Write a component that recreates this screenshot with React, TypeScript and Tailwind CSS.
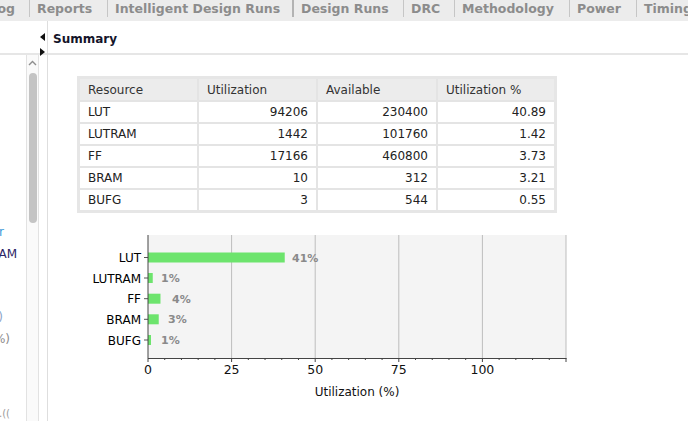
import React from 'react';

const tabs = [
  { label: 'Reports', w: 'w-[78px]', strong: false },
  { label: 'Intelligent Design Runs', w: 'w-[185px]', strong: false },
  { label: 'Design Runs', w: 'w-[111px]', strong: true },
  { label: 'DRC', w: 'w-[51px]', strong: false },
  { label: 'Methodology', w: 'w-[115px]', strong: false },
  { label: 'Power', w: 'w-[67px]', strong: false },
  { label: 'Timing', w: 'w-[80px]', strong: false },
];

const rows = [
  { name: 'LUT', used: '94206', avail: '230400', pct: 40.89 },
  { name: 'LUTRAM', used: '1442', avail: '101760', pct: 1.42 },
  { name: 'FF', used: '17166', avail: '460800', pct: 3.73 },
  { name: 'BRAM', used: '10', avail: '312', pct: 3.21 },
  { name: 'BUFG', used: '3', avail: '544', pct: 0.55 },
];

// chart geometry, in page coordinates
const X0 = 148;
const X1 = 566;
const TOP = 236;
const BOTTOM = 359;
const PX = (X1 - X0) / 125;
const centers = [258.5, 279, 299.7, 320.3, 341];
const labelX = [292, 161, 172, 168, 161];

function Tab({ label, w, strong }: { label: string; w: string; strong: boolean }) {
  return (
    <div className={`${w} flex shrink-0 h-full`}>
      <div className={strong ? 'w-[2px] h-[17px] bg-[#b3b3b3]' : 'w-px h-[17px] bg-[#c6c6c6]'} />
      <div className="pl-[7px] whitespace-nowrap">{label}</div>
    </div>
  );
}

function Chart() {
  const ticks: number[] = [];
  for (let v = 0; v <= 125; v += 5) ticks.push(v);
  return (
    <svg width={640} height={196} className="block">
      <g transform="translate(-48,-225)" fontFamily="DejaVu Sans, sans-serif">
        <rect x={X0} y={TOP} width={X1 - X0} height={BOTTOM - TOP} fill="#f4f4f4" />
        {[25, 50, 75, 100, 125].map((v) => (
          <line key={v} x1={X0 + v * PX} x2={X0 + v * PX} y1={TOP} y2={BOTTOM} stroke="#bdbdbd" strokeWidth={1} />
        ))}
        {rows.map((r, i) => (
          <g key={r.name}>
            <rect x={X0} y={centers[i] - 5} width={Math.max(r.pct * PX, 3)} height={10} fill="#6de46d" />
            <line x1={X0 - 4} x2={X0} y1={centers[i]} y2={centers[i]} stroke="#555" />
            <text x={141} y={centers[i] + 4.5} textAnchor="end" fontSize={12} fill="#000">
              {r.name}
            </text>
            <text x={labelX[i]} y={centers[i] + 4} fontSize={11} fontWeight="bold" fill="#8a8a8a">
              {Math.round(r.pct)}%
            </text>
          </g>
        ))}
        <line x1={X0} x2={X0} y1={TOP} y2={BOTTOM} stroke="#444" />
        <line x1={X0} x2={X1 + 0.5} y1={BOTTOM + 0.5} y2={BOTTOM + 0.5} stroke="#444" />
        {ticks.map((v) => (
          <line
            key={v}
            x1={X0 + v * PX}
            x2={X0 + v * PX}
            y1={BOTTOM}
            y2={BOTTOM + (v % 25 === 0 ? 4 : 2)}
            stroke="#444"
          />
        ))}
        {[0, 25, 50, 75, 100].map((v) => (
          <text key={v} x={X0 + v * PX} y={375} textAnchor="middle" fontSize={12.5} fill="#111">
            {v}
          </text>
        ))}
        <text x={357} y={397} textAnchor="middle" fontSize={12} fill="#111">
          Utilization (%)
        </text>
      </g>
    </svg>
  );
}

export default function App() {
  return (
    <div className="w-[688px] h-[421px] overflow-hidden bg-white font-['DejaVu_Sans',sans-serif]">
      {/* tab strip */}
      <div className="h-[21px] bg-[#ececec] flex text-[12.5px] font-bold text-[#8c8c8c] overflow-hidden">
        <div className="w-[29px] shrink-0 flex justify-end pr-[14px] overflow-hidden whitespace-nowrap">
          Log
        </div>
        {tabs.map((t) => (
          <Tab key={t.label} {...t} />
        ))}
      </div>

      <div className="flex h-[400px]">
        {/* left tree panel, scrolled sideways */}
        <div className="relative w-[48px] shrink-0 border-r border-[#dedede] flex flex-col">
          <div className="h-[34px] border-b-2 border-[#e6e6e6]" />
          <svg className="absolute left-[40px] top-[12px]" width="5" height="8">
            <polygon points="5,0 5,8 0,4" fill="#111" />
          </svg>
          <svg className="absolute left-[40px] top-[27px]" width="5" height="8">
            <polygon points="0,0 0,8 5,4" fill="#111" />
          </svg>
          <div className="flex flex-1">
            <div className="w-[26px] overflow-hidden text-[12px] pt-[166px] flex flex-col">
              <div className="h-[22px] flex justify-end items-center pr-[22px] whitespace-nowrap text-[#3b9ad9]">Timer</div>
              <div className="h-[22px] flex justify-end items-center pr-[9px] whitespace-nowrap text-[#2d2466]">LUTRAM</div>
              <div className="h-[41px]" />
              <div className="h-[22px] flex justify-end items-center pr-[23px] whitespace-nowrap text-[#8aa4c8]">(3)</div>
              <div className="h-[21px] flex justify-end items-center pr-[16px] whitespace-nowrap text-[#8c8c8c]">(1%)</div>
              <div className="h-[57px]" />
              <div className="h-[14px] flex justify-end items-center pr-[16px] whitespace-nowrap text-[10px] text-[#9a9a9a]">
                (1.((
              </div>
            </div>
            <div className="w-[13px] border-x border-[#e2e2e2] bg-[#fafafa] flex flex-col items-center">
              <svg className="mt-[5px]" width="9" height="6" viewBox="0 0 9 6">
                <path d="M1 5 L4.5 1.5 L8 5" fill="none" stroke="#8e8e8e" strokeWidth="1.4" />
              </svg>
              <div className="mt-[7px] w-[8px] h-[150px] rounded-full bg-[#c4c4c4]" />
            </div>
            <div className="w-[8px]" />
          </div>
        </div>

        {/* main summary panel */}
        <div className="flex-1 flex flex-col">
          <div className="h-[34px] border-b-2 border-[#e6e6e6] flex items-center pl-[5px] pt-[4px] text-[12px] font-bold text-[#14142a]">
            Summary
          </div>

          <div className="ml-[29px] mt-[21px] w-[480px] bg-[#e6e6e6] p-[3px]">
            <div className="grid grid-cols-[117px_117px_118px_116px] gap-[2px] bg-[#e4e4e4] text-[12px] text-[#222]">
              {['Resource', 'Utilization', 'Available', 'Utilization %'].map((h) => (
                <div key={h} className="h-[21px] bg-[#ececec] flex items-center px-[8px] text-[#333]">
                  {h}
                </div>
              ))}
              {rows.map((r) => (
                <React.Fragment key={r.name}>
                  <div className="h-[20px] bg-white flex items-center px-[8px]">{r.name}</div>
                  <div className="h-[20px] bg-white flex items-center justify-end px-[8px]">{r.used}</div>
                  <div className="h-[20px] bg-white flex items-center justify-end px-[8px]">{r.avail}</div>
                  <div className="h-[20px] bg-white flex items-center justify-end px-[8px]">{r.pct.toFixed(2)}</div>
                </React.Fragment>
              ))}
            </div>
          </div>

          <div className="mt-[11px]">
            <Chart />
          </div>
        </div>
      </div>
    </div>
  );
}
